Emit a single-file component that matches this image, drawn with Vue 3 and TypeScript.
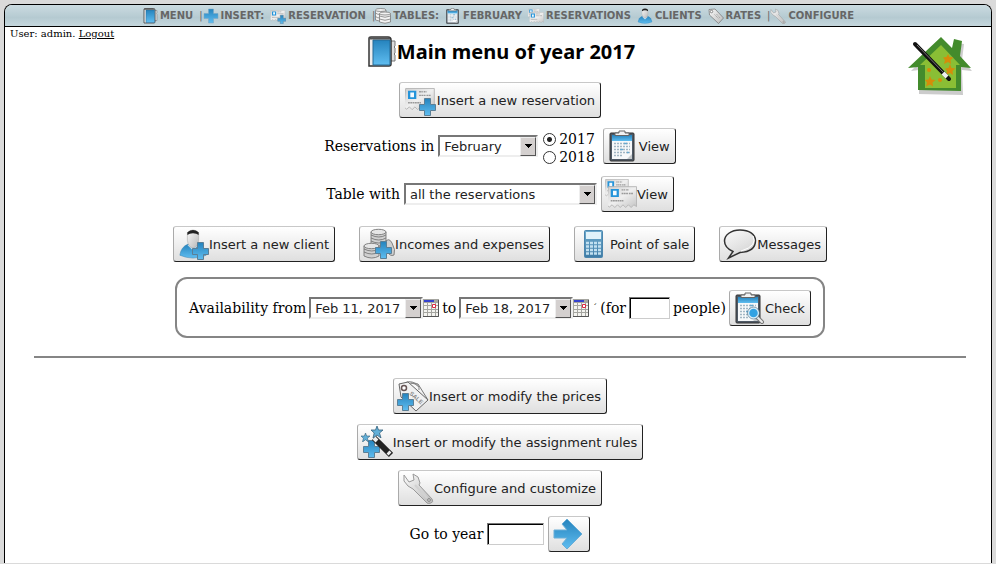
<script setup lang="ts">
import { ref } from 'vue'

interface NavItem {
  label: string
  icon: string
  separated?: boolean
  heading?: boolean
}

interface ActionButton {
  label: string
  icon: string
  wide?: boolean
}

const navItems: NavItem[] = [
  { label: 'MENU', icon: 'book' },
  { label: 'INSERT:', icon: 'plus', separated: true, heading: true },
  { label: 'RESERVATION', icon: 'card-add' },
  { label: 'TABLES:', icon: 'database', separated: true, heading: true },
  { label: 'FEBRUARY', icon: 'clipboard' },
  { label: 'RESERVATIONS', icon: 'cards' },
  { label: 'CLIENTS', icon: 'person' },
  { label: 'RATES', icon: 'tag' },
  { label: 'CONFIGURE', icon: 'wrench', separated: true },
]

const shortcuts: ActionButton[] = [
  { label: 'Insert a new client', icon: 'person-add' },
  { label: 'Incomes and expenses', icon: 'coins' },
  { label: 'Point of sale', icon: 'calculator' },
  { label: 'Messages', icon: 'bubble', wide: true },
]

const settings: ActionButton[] = [
  { label: 'Insert or modify the prices', icon: 'price-add' },
  { label: 'Insert or modify the assignment rules', icon: 'wand-add' },
  { label: 'Configure and customize', icon: 'wrench' },
]

const month = ref('February')
const year = ref('2017')
const table = ref('all the reservations')
const from = ref('Feb 11, 2017')
const to = ref('Feb 18, 2017')
const people = ref('')
const targetYear = ref('')
</script>

<template>
  <svg class="sprite" aria-hidden="true">
    <defs>
      <linearGradient id="blue" x1="0" y1="0" x2="0" y2="1">
        <stop offset="0" stop-color="#2583bd" />
        <stop offset="1" stop-color="#5fbdf0" />
      </linearGradient>
      <linearGradient id="steel" x1="0" y1="0" x2="1" y2="1">
        <stop offset="0" stop-color="#fafafa" />
        <stop offset="1" stop-color="#b9b9b9" />
      </linearGradient>
      <linearGradient id="paper" x1="0" y1="0" x2="1" y2="1">
        <stop offset="0" stop-color="#cfcfcf" />
        <stop offset="0.5" stop-color="#efefef" />
        <stop offset="1" stop-color="#c4c4c4" />
      </linearGradient>
      <linearGradient id="calc" x1="0" y1="0" x2="0" y2="1">
        <stop offset="0" stop-color="#6eaacd" />
        <stop offset="1" stop-color="#3f7ca6" />
      </linearGradient>

      <symbol id="i-plus" viewBox="0 0 32 32">
        <path d="M11 2h10v9h9v10h-9v9H11v-9H2V11h9z" fill="url(#blue)" stroke="#78a5c2" />
      </symbol>
      <symbol id="i-badge" viewBox="0 0 32 32">
        <path d="M20.500 14.500h6v6h5v6h-5v5h-6v-5h-5v-6h5z" fill="url(#blue)" stroke="#5b7f96" />
      </symbol>
      <symbol id="i-book" viewBox="0 0 32 32">
        <path d="M25 5h5v5l-1 1 1 1v5l-1 1 1 1v6h-5z" fill="#ddd" stroke="#777" />
        <path d="M4 2.500Q4 1 6 1h17q3 0 3 3v24q0 2-2 2H4z" fill="#eee" stroke="#333" stroke-width="1.500" />
        <path d="M8 4h17v25H8z" fill="url(#blue)" stroke="#246894" />
        <path d="M4 2.500h21" stroke="#555" stroke-width="2" />
      </symbol>
      <symbol id="i-slip" viewBox="0 0 32 26">
        <path d="M.5.5h31v22l-3-2-3 3-3-3-3 3-3-3-3 3-3-3-3 3-3-3-3 2.500-3-2.500z" fill="url(#paper)" stroke="#b4b4b4" />
        <path d="M3 3h9v9H3z" fill="#2494da" />
        <path d="M5.500 5h4v5h-4z" fill="#f4fbff" />
        <path d="M15 4h4m1 0h3m-8 4h7m1 0h5M3 16h14" stroke="#999" stroke-width="1.500" stroke-dasharray="2 .5" />
      </symbol>
      <symbol id="i-card-add" viewBox="0 0 32 32">
        <use href="#i-slip" x="1" y="4" width="30" height="24" />
        <use href="#i-badge" width="32" height="32" />
      </symbol>
      <symbol id="i-cards" viewBox="0 0 32 32">
        <use href="#i-slip" x="0" y="1" width="24" height="19" />
        <use href="#i-slip" x="3" y="8" width="29" height="24" />
      </symbol>
      <symbol id="i-clipboard" viewBox="0 0 32 32">
        <rect x="3" y="3" width="24" height="28" rx="1" fill="#4e5965" stroke="#343434" />
        <path d="M5 5h20v24H5z" fill="#f6f8fa" />
        <path d="M5 5h20v6H5z" fill="url(#blue)" />
        <path d="M8 5.500V3h4V1h6v2h4v2.500z" fill="#f2f2f2" stroke="#666" />
        <path d="M7 13.500h16M7 16.500h16M7 19.500h16M7 22.500h16M7 25.500h8" stroke="#a2b6c4" stroke-width="1.500" stroke-dasharray="2 1" />
        <path d="M17 13.500h3m-7 6h3m4 3h2" stroke="#67a8cf" stroke-width="1.500" />
        <path d="m20 29 5-5v5z" fill="#c5c9cc" />
      </symbol>
      <symbol id="i-check" viewBox="0 0 32 32">
        <use href="#i-clipboard" width="32" height="32" />
        <path d="m24 25 5 5" stroke="#777" stroke-width="4" stroke-linecap="round" />
        <path d="m24 25 5 5" stroke="#eee" stroke-width="2" stroke-linecap="round" />
        <circle cx="20.500" cy="21" r="5" fill="#32a2e3" stroke="#d8edf9" stroke-width="1.500" />
        <circle cx="20.500" cy="21" r="6" fill="none" stroke="#5a7b90" stroke-width=".7" />
      </symbol>
      <symbol id="i-database" viewBox="0 0 32 32">
        <g fill="#f2f2f2" stroke="#777" stroke-width="1.500">
          <path d="M1 4v20q10 5 21 0V4" />
          <ellipse cx="11.500" cy="4" rx="10.500" ry="3" />
          <path d="M9 11v17q11 5 22 0V11" />
          <ellipse cx="20" cy="11" rx="11" ry="3" />
          <path d="M9 16q11 5 22 0M9 22q11 5 22 0M1 10q4 3 8 3M1 17q4 3 8 3" fill="none" />
        </g>
      </symbol>
      <symbol id="i-person" viewBox="0 0 32 32">
        <path d="M2 28q1-9 9-12h10q8 3 9 12-14 6-28 0z" fill="url(#blue)" stroke="#287bae" stroke-width=".5" />
        <path d="M10 17h12l-6 6z" fill="#c9e4f4" />
        <path d="M10 4q6-6 12 0v8q-1 8-6 8t-6-8z" fill="url(#steel)" stroke="#aaa" stroke-width=".6" />
        <path d="M10 6.500V3.500q6-5 12 0v3q-2-2-6-2t-6 2z" fill="#222" />
      </symbol>
      <symbol id="i-person-add" viewBox="0 0 32 32">
        <use href="#i-person" x="1" y="0" width="30" height="32" />
        <use href="#i-badge" width="32" height="32" />
      </symbol>
      <symbol id="i-coins" viewBox="0 0 32 32">
        <g fill="#d0d0d0" stroke="#777" stroke-width=".9">
          <path d="M22 14q4-5 7 1 4 7 2 12-4 2-7-4z" />
          <path d="M8 4v12q8 4 15 0V4M1 18v10q8 4 15 0V18" />
          <path d="M8 7q8 4 15 0M8 10q8 4 15 0M8 13q8 4 15 0M1 21q8 4 15 0M1 24q8 4 15 0" fill="none" />
          <ellipse cx="15.500" cy="4" rx="7.500" ry="2.700" fill="#e6e6e6" />
          <ellipse cx="8.500" cy="18" rx="7.500" ry="2.700" fill="#e6e6e6" />
        </g>
        <use href="#i-badge" x="-3" y="-1" width="32" height="32" />
      </symbol>
      <symbol id="i-calculator" viewBox="0 0 32 32">
        <rect x="6.500" y="2.500" width="18" height="27" rx="1" fill="url(#calc)" stroke="#4b86ae" />
        <path d="M8 4h15v7H8z" fill="#e1f2fa" />
        <path d="M8 15h15M8 18.500h15M8 22h15M8 25.500h15" stroke="#c2e0f0" stroke-width="2.300" stroke-dasharray="3 1" />
      </symbol>
      <symbol id="i-bubble" viewBox="0 0 34 32">
        <path d="M17 2C8 2 1.500 7 1.500 13c0 5 3 8 8.500 10.500L5.500 30 17 24.500c10-.5 15.500-5 15.500-12C32.500 6 26 2 17 2z" fill="url(#steel)" fill-opacity=".5" stroke="#333" stroke-width="1.500" />
        <path d="M30 8q5 10-12 15" fill="none" stroke="#fff" />
      </symbol>
      <symbol id="i-tag" viewBox="0 0 32 32">
        <path d="m2 3 12-1 17 18-10 11L3 14z" fill="url(#steel)" stroke="#777" stroke-width="1.500" />
        <circle cx="7" cy="7" r="2.500" fill="#fff" stroke="#666" stroke-width="1.500" />
        <path d="m13 13 8 8m-4-9 7 8" stroke="#aaa" stroke-width="2" stroke-dasharray="3 1" />
      </symbol>
      <symbol id="i-price-add" viewBox="0 0 32 32">
        <path d="m14 3 7 1 10 16" fill="none" stroke="#777" />
        <path d="M7 8q0-8 8-6t7 8M6 7q8-8 16 0" fill="none" stroke="#888" />
        <path d="m2 4 9-2 20 18-12 11L4 17z" fill="#f1f1f1" stroke="#666" />
        <circle cx="7" cy="8" r="2.500" fill="#fff" stroke="#655" stroke-width="1.500" />
        <text x="12" y="14" class="sale" transform="rotate(42 12 14)">SALE</text>
        <use href="#i-badge" x="-15" y="-1" width="32" height="32" />
      </symbol>
      <symbol id="i-star" viewBox="0 0 12 12">
        <path d="m6 0 1.500 4L12 4 8.500 7l1.500 5-4-3-4 3 1.200-5L0 4l4.500 0z" fill="#61afd8" stroke="#345f7b" stroke-width=".8" />
      </symbol>
      <symbol id="i-wand-add" viewBox="0 0 32 32">
        <use href="#i-badge" x="-13" y="0" width="32" height="32" />
        <path d="m13 12 17 17" stroke="#222" stroke-width="6" />
        <path d="m13 12 3 3m11 11 2 2" stroke="#eee" stroke-width="4" />
        <use href="#i-star" x="10" y="0" width="12" height="12" />
        <use href="#i-star" x="0" y="7" width="9" height="9" />
      </symbol>
      <symbol id="i-wrench" viewBox="0 0 32 32">
        <path d="m2 3 5 7 5-2-1-6 5 3 2 6-1 2 13 14q2 3-1 4t-4 0L11 17l-5-3-4-5z" fill="url(#steel)" stroke="#999" />
        <path d="m13 13 12 13" stroke="#d1d1d1" stroke-width="2" />
        <circle cx="27" cy="28" r="1.300" fill="#fff" stroke="#777" />
      </symbol>
      <symbol id="i-arrow" viewBox="0 0 32 32">
        <path d="M2 12h13l-5-6 5-5 15 15-15 15-5-5 5-6H2z" fill="url(#blue)" stroke="#6aaed7" />
      </symbol>
      <symbol id="i-calendar" viewBox="0 0 16 18">
        <path d="M0 0h16v18H0z" fill="#a5a5a0" />
        <path d="M1 1h10v2H1z" fill="#3542cf" />
        <path d="M1 4h3v2H1zm4 0h3v2H5zm4 0h3v2H9zm4 0h2v2h-2zM1 7h3v3H1zm4 0h3v3H5zm4 0h3v3H9zm4 0h2v3h-2zM1 11h3v2H1zm4 0h3v2H5zm4 0h3v2H9zm4 0h2v2h-2zM1 14h3v3H1zm4 0h3v3H5zm4 0h3v3H9zm4 0h2v3h-2z" fill="#f4f4f0" />
        <path d="M9.500 5.500h3v3h-3z" fill="#fff" stroke="#dc2941" />
        <path d="M0 17.500h15.500V1" fill="none" stroke="#555" />
      </symbol>
    </defs>
  </svg>

  <div class="page">
    <div class="frame">
      <nav class="nav">
        <template v-for="item in navItems" :key="item.label">
          <span v-if="item.separated" class="divider">|</span>
          <component :is="item.heading ? 'span' : 'a'" class="nav-item" :href="item.heading ? undefined : '#'">
            <svg class="nav-icon"><use :href="'#i-' + item.icon" /></svg>
            <span>{{ item.label }}</span>
          </component>
        </template>
      </nav>

      <main class="content">
        <header class="hero">
          <div class="user">User: admin. <a href="#">Logout</a></div>
          <div class="hero-center">
            <h1>
              <svg class="icon"><use href="#i-book" /></svg>
              <span>Main menu of year 2017</span>
            </h1>
            <button type="button" class="btn">
              <svg class="icon wide"><use href="#i-card-add" /></svg>
              <span>Insert a new reservation</span>
            </button>
          </div>
          <svg class="logo" viewBox="0 0 64 60">
            <path d="m3 34 31-31 13 13 1-10 8 1-2 16 10 11-10-1 1 25-44-1V33z" fill="#999" fill-opacity=".5" />
            <path d="M0 31 33 0l11 11 2-9 8 2-2 15 11 12-10-1v24l-43-1V30z" fill="#438b2c" />
            <path d="m12 28 21-20 19 20h-4v23H17V28z" fill="#8abe35" />
            <g fill="#d58c0a">
              <path d="m40 17 1.500 3 4 .5-3 2.500.5 4-3-2-4 2 1-4-2-2.500 3.500-.5zM42 27l1.500 4 4 .5-3 2.500.5 4-3-2-4 2 1-4-2-2.500 3.500-.5zM22 39l1.500 3.500 4 .5-3 2.500.5 4-3-2-4 2 1-4-2-2.500 3.500-.5z" />
              <circle cx="21" cy="33" r="2" />
              <circle cx="32" cy="43" r="2" />
            </g>
            <path d="m7 7 34 35" stroke="#111" stroke-width="4" stroke-linecap="round" />
            <path d="m9 8 26 27" stroke="#777" stroke-width="1" />
            <path d="m35 36 4 4" stroke="#eee" stroke-width="4" />
          </svg>
        </header>

        <form class="row" @submit.prevent>
          <label for="month">Reservations in</label>
          <span class="select month">
            <select id="month" v-model="month"><option>February</option></select>
          </span>
          <span class="years">
            <label><input v-model="year" type="radio" name="year" value="2017" />2017</label>
            <label><input v-model="year" type="radio" name="year" value="2018" />2018</label>
          </span>
          <button class="btn">
            <svg class="icon"><use href="#i-clipboard" /></svg>
            <span>View</span>
          </button>
        </form>

        <form class="row tables" @submit.prevent>
          <label for="table">Table with</label>
          <span class="select table">
            <select id="table" v-model="table"><option>all the reservations</option></select>
          </span>
          <button class="btn">
            <svg class="icon"><use href="#i-cards" /></svg>
            <span>View</span>
          </button>
        </form>

        <div class="shortcuts">
          <button v-for="item in shortcuts" :key="item.label" type="button" class="btn">
            <svg class="icon" :class="{ wide: item.wide }"><use :href="'#i-' + item.icon" /></svg>
            <span>{{ item.label }}</span>
          </button>
        </div>

        <form class="availability" @submit.prevent>
          <label for="from">Availability from</label>
          <span class="date">
            <span class="select day">
              <select id="from" v-model="from"><option>Feb 11, 2017</option></select>
            </span>
            <svg class="calendar"><use href="#i-calendar" /></svg>
          </span>
          <label for="to">to</label>
          <span class="date">
            <span class="select day">
              <select id="to" v-model="to"><option>Feb 18, 2017</option></select>
            </span>
            <svg class="calendar"><use href="#i-calendar" /></svg>
          </span>
          <span class="mark">´</span>
          <label for="people">(for</label>
          <input id="people" v-model="people" class="field small" type="text" />
          <label for="people">people)</label>
          <button class="btn">
            <svg class="icon"><use href="#i-check" /></svg>
            <span>Check</span>
          </button>
        </form>

        <hr />

        <div class="settings">
          <button v-for="item in settings" :key="item.label" type="button" class="btn">
            <svg class="icon"><use :href="'#i-' + item.icon" /></svg>
            <span>{{ item.label }}</span>
          </button>
          <form class="row goto" @submit.prevent>
            <label for="goto">Go to year</label>
            <input id="goto" v-model="targetYear" class="field" type="text" />
            <button class="btn" aria-label="Go">
              <svg class="icon"><use href="#i-arrow" /></svg>
            </button>
          </form>
        </div>
      </main>
    </div>
  </div>
</template>

<style>
body {
  background: #dadada;
}
</style>

<style scoped>
.sprite {
  position: absolute;
  width: 0;
  height: 0;
}

.sale {
  font: bold 6px "Liberation Sans", sans-serif;
  fill: #888;
}

.page {
  padding: 4px 4px 1px;
  color: #000;
  font: 14px/18px "DejaVu Serif", serif;
}

.frame {
  border: solid #000;
  border-width: 1px 1px 0;
  border-radius: 8px 8px 0 0;
  background: #fff;
  overflow: hidden;
}

.nav {
  display: flex;
  align-items: center;
  justify-content: center;
  gap: 6px;
  height: 21px;
  border-bottom: 1px solid #000;
  background: linear-gradient(#cbdbe1, #b5cad1 60%, #c5d7dd);
  color: #666;
  font: bold 10px/16px "DejaVu Sans", sans-serif;
}

.nav-item {
  display: flex;
  align-items: center;
  gap: 2px;
  color: inherit;
  text-decoration: none;
}

.divider {
  margin-right: -6px;
  font-weight: normal;
}

.nav-icon {
  width: 16px;
  height: 16px;
}

.content {
  padding: 0 0 11px 4px;
}

.hero {
  display: grid;
  grid-template-columns: 1fr auto 1fr;
  align-items: start;
}

.user {
  padding-left: 1px;
  font-size: 10px;
  line-height: 14px;
}

.user a {
  color: inherit;
}

.hero-center {
  display: flex;
  flex-direction: column;
  align-items: center;
  gap: 14px;
  padding-top: 9px;
}

h1 {
  display: flex;
  align-items: center;
  margin: 0;
  font: bold 20px/32px "Noto Sans", sans-serif;
}

.logo {
  justify-self: end;
  width: 64px;
  height: 60px;
  margin: 10px 19px 0 0;
}

.icon {
  flex: none;
  width: 32px;
  height: 32px;
}

.icon.wide {
  width: 34px;
}

.btn {
  display: flex;
  align-items: center;
  height: 36px;
  padding: 0 5px 0 3px;
  border: 1px solid;
  border-color: #c8c8c8 #222 #222 #aaa;
  border-radius: 3px;
  background: linear-gradient(#fff, #dfdfdf);
  color: #222;
  font: 13px/18px "DejaVu Sans", sans-serif;
}

.btn span {
  padding-top: 2px;
}

.row {
  display: flex;
  align-items: center;
  justify-content: center;
  gap: 4px;
  margin-top: 10px;
}

.row.tables {
  margin-top: 12px;
}

.select {
  display: grid;
  grid-template-columns: 1fr 16px;
  box-sizing: border-box;
  height: 22px;
  border: 2px solid;
  border-color: #777 #eee #eee #777;
  background: #fff;
}

.select select {
  grid-area: 1 / 1 / 2 / 3;
  min-width: 0;
  padding: 1px 16px 0 4px;
  border: 0;
  appearance: none;
  background: none;
  color: #222;
  font: 13px/18px "DejaVu Sans", sans-serif;
}

.select::after {
  content: "";
  grid-area: 1 / 2;
  border: 1px solid;
  border-color: #eee #555 #555 #eee;
  background:
    linear-gradient(#000, #000) 4px 6px / 7px 1px no-repeat,
    linear-gradient(#000, #000) 5px 7px / 5px 1px no-repeat,
    linear-gradient(#000, #000) 6px 8px / 3px 1px no-repeat,
    linear-gradient(#000, #000) 7px 9px / 1px 1px no-repeat,
    #d4d0cf;
  pointer-events: none;
}

.month {
  width: 100px;
}

.table {
  width: 193px;
}

.day {
  width: 114px;
}

.years {
  display: flex;
  flex-direction: column;
  margin-bottom: -2px;
  padding: 2px 4px 0 1px;
}

.years label {
  display: flex;
  align-items: center;
  gap: 3px;
}

.years input {
  width: 13px;
  height: 13px;
  margin: 0;
  border: 1px solid #333;
  border-radius: 50%;
  appearance: none;
  background: #fff;
}

.years input:checked {
  background: radial-gradient(circle, #222 2px, #fff 3px);
}

.shortcuts {
  display: flex;
  flex-wrap: wrap;
  justify-content: center;
  gap: 24px;
  margin-top: 14px;
}

.availability {
  display: flex;
  align-items: center;
  gap: 3px;
  width: fit-content;
  margin: 15px auto 0;
  padding: 11px 12px 10px;
  border: 2px solid #858585;
  border-radius: 12px;
}

.date {
  display: flex;
  align-items: center;
}

.calendar {
  width: 16px;
  height: 18px;
}

.mark {
  font-size: 10px;
}

.field {
  box-sizing: border-box;
  width: 57px;
  height: 22px;
  padding: 0 4px;
  border: 1px solid;
  border-color: #777 #ccc #ccc #777;
  background: #fff;
  box-shadow: inset 1px 1px #000;
  font: 13px/18px "DejaVu Sans", sans-serif;
}

.field.small {
  width: 41px;
}

hr {
  height: 2px;
  margin: 18px 25px 20px;
  border: 0;
  background: #858585;
}

.settings {
  display: flex;
  flex-direction: column;
  align-items: center;
  gap: 10px;
}

.row.goto {
  margin-top: 0;
}
</style>
